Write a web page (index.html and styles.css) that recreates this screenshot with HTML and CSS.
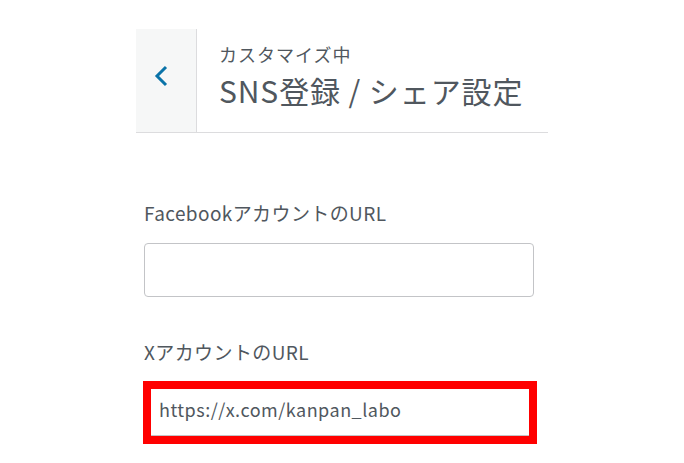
FILE: index.html
```html
<!DOCTYPE html>
<html lang="ja">
<head>
<meta charset="utf-8">
<link rel="stylesheet" href="styles.css">
</head>
<body>
<div class="panel">
  <div class="header">
    <div class="back">
      <svg width="14" height="22" viewBox="0 0 14 22"><path d="M12 2 L3 11 L12 20" fill="none" stroke="#0a73a8" stroke-width="3"/></svg>
    </div>
    <div class="titles">
      <div class="sub">カスタマイズ中</div>
      <div class="title">SNS登録 / シェア設定</div>
    </div>
  </div>
  <div class="fields">
    <div class="field">
      <div class="label">FacebookアカウントのURL</div>
      <div class="input"></div>
    </div>
    <div class="field">
      <div class="label">XアカウントのURL</div>
      <div class="input marked">https://x.com/kanpan_labo</div>
    </div>
  </div>
</div>
</body>
</html>
```
FILE: styles.css
```css
html, body { margin: 0; padding: 0; background: #fff; }
body { font-family: "Noto Sans CJK JP", "Noto Sans", sans-serif; color: #50575e; }
.panel { width: 412px; margin-left: 136px; padding-top: 29px; }
.header { display: flex; height: 103px; border-bottom: 1px solid #dcdcde; }
.back { width: 61px; background: #f6f7f7; border-right: 1px solid #dcdcde; display: flex; align-items: flex-start; justify-content: center; padding-top: 36px; box-sizing: border-box; padding-right: 10px; }
.titles { padding-left: 22px; padding-top: 12px; }
.sub { font-size: 18px; line-height: 26px; letter-spacing: 1px; }
.title { font-size: 30px; line-height: 40px; margin-top: 3px; letter-spacing: 0.9px; }
.fields { padding: 66px 14px 0 8px; }
.field { margin-bottom: 41px; }
.label { font-size: 19px; line-height: 28px; margin-bottom: 16px; letter-spacing: 0.4px; }
.input { height: 54px; box-sizing: border-box; border: 1px solid #c3c4c7; border-radius: 4px; font-size: 18px; line-height: 52px; padding-left: 14px; position: relative; letter-spacing: 0.5px; }
.marked::after { content: ""; position: absolute; left: -2px; top: -2px; right: -4px; bottom: -9px; border: 8px solid #ff0000; }
```
